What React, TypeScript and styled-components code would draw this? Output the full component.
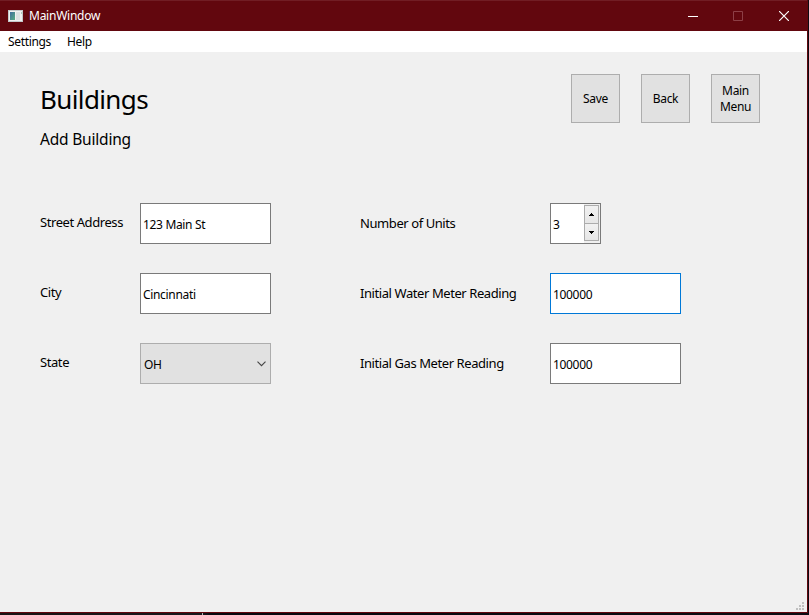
import React from "react";
import styled, { createGlobalStyle } from "styled-components";

const GlobalStyle = createGlobalStyle`
  * { box-sizing: border-box; }
  body {
    margin: 0;
    overflow: hidden;
    background: #16090b;
    color: #000;
    font-family: "Segoe UI", "Noto Sans", "Open Sans", sans-serif;
    font-size: 12px;
  }
`;

const Desktop = styled.div`
  width: 809px;
  height: 615px;
  background: linear-gradient(90deg, #1b1213, #17171c 25%, #08080f 26%, #0c0c12);
`;

const Window = styled.div`
  width: 808px;
  height: 613px;
  display: flex;
  flex-direction: column;
  background: #f0f0f0;
  border-right: 1px solid #62070e;
  border-bottom: 1px solid #62070e;
`;

const TitleBar = styled.header`
  height: 31px;
  display: flex;
  align-items: center;
  padding-left: 8px;
  background: #62070e;
  border-top: 1px solid #711d24;
  color: #fff;
`;

const Caption = styled.span`
  flex: 1;
  padding-left: 6px;
  line-height: 16px;
`;

const CaptionControl = styled.button<{ $dim?: boolean }>`
  width: 46px;
  height: 29px;
  padding: 0;
  border: 0;
  background: none;
  display: grid;
  place-items: center;
  color: ${(p) => (p.$dim ? "#8d3f46" : "#fff")};
`;

const MenuBar = styled.nav`
  height: 21px;
  display: flex;
  gap: 16px;
  padding-left: 8px;
  background: #fff;
  line-height: 22px;
`;

const Text = styled.span<{ $size?: number; $track?: number }>`
  display: block;
  white-space: nowrap;
  font-size: ${(p) => p.$size ?? 12}px;
  letter-spacing: ${(p) => p.$track ?? -0.33}px;
`;

const LabelText = styled(Text)`
  font-size: 13px;
  letter-spacing: -0.42px;
`;

const Content = styled.main`
  flex: 1;
  display: flex;
  flex-direction: column;
  padding: 22px 47px 0 40px;
`;

const Heading = styled.div`
  height: 129px;
  display: flex;
  justify-content: space-between;
`;

const Titles = styled.div`
  padding-top: 7px;
`;

const Title = styled(Text).attrs({ as: "h1" })`
  margin: 0;
  font-weight: 400;
  line-height: 36px;
`;

const Subtitle = styled(Text).attrs({ as: "h2" })`
  margin: 11px 0 0;
  font-weight: 400;
  line-height: 22px;
`;

const Actions = styled.div`
  display: flex;
  gap: 21px;
`;

const ActionButton = styled.button`
  width: 49px;
  height: 49px;
  padding: 0;
  border: 1px solid #adadad;
  background: #e1e1e1;
  color: #000;
  font: inherit;
  line-height: 16px;
  display: grid;
  place-content: center;
  text-align: center;
`;

const Form = styled.form`
  display: grid;
  grid-template-columns: 100px 220px 190px 131px;
  grid-auto-rows: 41px;
  row-gap: 29px;
`;

const Label = styled.label<{ $drop?: number }>`
  padding-top: ${(p) => 9 + (p.$drop ?? 0)}px;
  line-height: 20px;
`;

const Field = styled.div<{ $focused?: boolean }>`
  width: 131px;
  height: 41px;
  padding: 2px 0 0 2px;
  border: 1px solid ${(p) => (p.$focused ? "#0078d7" : "#7a7a7a")};
  background: #fff;
  display: flex;
  align-items: center;
`;

const Select = styled(Field)`
  justify-content: space-between;
  padding: 1px 4px 0 3px;
  border-color: #adadad;
  background: #e1e1e1;
`;

const SpinBox = styled(Field)`
  width: 51px;
  padding: 0 0 0 2px;
  justify-content: space-between;
`;

const SpinValue = styled.div`
  padding-top: 2px;
`;

const Spinner = styled.div`
  width: 16px;
  height: 39px;
  padding: 1px 1px 2px 0;
  background: #f0f0f0;
  display: flex;
  flex-direction: column;
`;

const Step = styled.div<{ $lower?: boolean }>`
  height: ${(p) => (p.$lower ? 17 : 19)}px;
  border: 1px solid #acacac;
  border-top-width: ${(p) => (p.$lower ? 0 : 1)}px;
  background: linear-gradient(#f1f1f1, #e6e6e6);
  display: grid;
  place-items: center;
`;

const Footer = styled.footer`
  display: flex;
  justify-content: flex-end;
  padding: 0 3px 2px 0;
`;

const Divider = styled.div`
  width: 1px;
  height: 2px;
  margin-left: 202px;
  background: #b7b7b7;
`;

const AppIcon = () => (
  <svg width="15" height="12" viewBox="0 0 15 12" shapeRendering="crispEdges">
    <defs>
      <linearGradient id="pane" x1="0" y1="0" x2="1" y2="1">
        <stop offset="0" stopColor="#3f6d9d" />
        <stop offset="1" stopColor="#57ad82" />
      </linearGradient>
    </defs>
    <path fill="#c3c8ca" d="M0 0h15v12H0z" />
    <path fill="#f0f1f1" d="M1 1h13v10H1z" />
    <path fill="url(#pane)" d="M2 2h5v8H2z" />
    <path fill="#dbe1e2" d="M8 2h4v8H8z" />
    <path fill="#a9c9bc" d="M13 2h1v2h-1z" />
  </svg>
);

const StepArrow = ({ down }: { down?: boolean }) => (
  <svg width="5" height="3" viewBox="0 0 5 3" shapeRendering="crispEdges">
    <path d={down ? "M0 0h5v1H4v1H3v1H2V2H1V1H0z" : "M2 0h1v1h1v1h1v1H0V2h1V1h1z"} />
  </svg>
);

export default function App() {
  return (
    <Desktop>
      <GlobalStyle />
      <Window>
        <TitleBar>
          <AppIcon />
          <Caption><Text $track={-0.25}>MainWindow</Text></Caption>
          <CaptionControl aria-label="Minimize">
            <svg width="12" height="10"><path d="M2 5.5h10" stroke="currentColor" /></svg>
          </CaptionControl>
          <CaptionControl aria-label="Maximize" $dim>
            <svg width="10" height="10"><path d="M.5.5h9v9h-9z" fill="none" stroke="currentColor" /></svg>
          </CaptionControl>
          <CaptionControl aria-label="Close">
            <svg width="10" height="10"><path d="M0 0l10 10M10 0L0 10" stroke="currentColor" strokeWidth="1.2" /></svg>
          </CaptionControl>
        </TitleBar>
        <MenuBar>
          <Text>Settings</Text>
          <Text>Help</Text>
        </MenuBar>
        <Content>
          <Heading>
            <Titles>
              <Title $size={26} $track={-0.62}>Buildings</Title>
              <Subtitle $size={15.5} $track={-0.2}>Add Building</Subtitle>
            </Titles>
            <Actions>
              <ActionButton><Text>Save</Text></ActionButton>
              <ActionButton><Text>Back</Text></ActionButton>
              <ActionButton><Text>Main</Text><Text>Menu</Text></ActionButton>
            </Actions>
          </Heading>
          <Form>
            <Label><LabelText>Street Address</LabelText></Label>
            <Field><Text>123 Main St</Text></Field>
            <Label $drop={1}><LabelText>Number of Units</LabelText></Label>
            <SpinBox>
              <SpinValue><Text>3</Text></SpinValue>
              <Spinner>
                <Step><StepArrow /></Step>
                <Step $lower><StepArrow down /></Step>
              </Spinner>
            </SpinBox>
            <Label><LabelText>City</LabelText></Label>
            <Field><Text>Cincinnati</Text></Field>
            <Label $drop={1}><LabelText>Initial Water Meter Reading</LabelText></Label>
            <Field $focused><Text>100000</Text></Field>
            <Label><LabelText>State</LabelText></Label>
            <Select>
              <Text>OH</Text>
              <svg width="9" height="6"><path d="M.5.7l4 4 4-4" fill="none" stroke="#444" strokeWidth="1.1" /></svg>
            </Select>
            <Label $drop={1}><LabelText>Initial Gas Meter Reading</LabelText></Label>
            <Field><Text>100000</Text></Field>
          </Form>
        </Content>
        <Footer>
          <svg width="8" height="8" fill="#bfbfbf" shapeRendering="crispEdges">
            <path d="M6 0h2v2H6zM3 3h2v2H3zM6 3h2v2H6zM0 6h2v2H0zM3 6h2v2H3zM6 6h2v2H6z" />
          </svg>
        </Footer>
      </Window>
      <Divider />
    </Desktop>
  );
}
